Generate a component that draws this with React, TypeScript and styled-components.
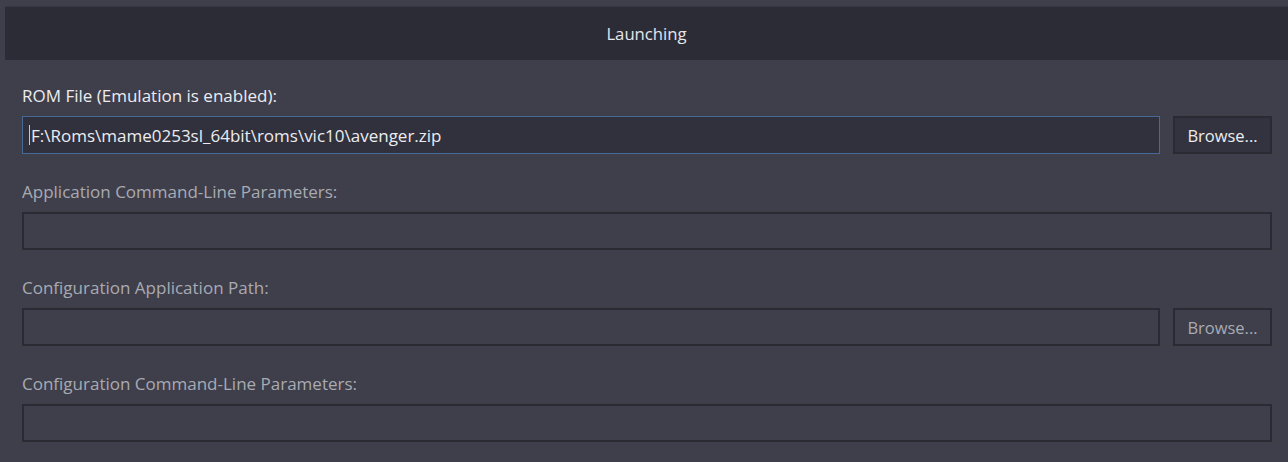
import React from 'react';
import styled, {createGlobalStyle} from 'styled-components';

const Global = createGlobalStyle`
  html, body {
    margin: 0;
    padding: 0;
    background: #3e3f4b;
  }
  body {
    font-family: "Open Sans", "Noto Sans", "Liberation Sans", sans-serif;
    overflow: hidden;
  }
`;

const Page = styled.div`
  width: 1288px;
  height: 462px;
  background: #3e3f4b;
  padding-top: 6px;
  box-sizing: border-box;
`;

const Header = styled.div`
  margin-left: 5px;
  height: 54px;
  background: #2c2c37;
  border-top: 1px solid #363744;
  box-sizing: border-box;
  display: flex;
  align-items: center;
  justify-content: center;
  color: #e6e6ea;
  font-size: 16.7px;
`;

const Form = styled.div`
  padding: 24px 16px 0 22px;
  display: flex;
  flex-direction: column;
  gap: 26px;
`;

const Field = styled.div`
  display: flex;
  flex-direction: column;
  gap: 8px;
`;

const Label = styled.div<{$active?: boolean}>`
  height: 24px;
  line-height: 24px;
  font-size: 17px;
  color: ${p => (p.$active ? '#ececf0' : '#a9aab2')};
`;

const Row = styled.div`
  display: flex;
  gap: 13px;
  height: 38px;
`;

const Input = styled.div<{$focused?: boolean}>`
  flex: 1;
  box-sizing: border-box;
  border: ${p => (p.$focused ? '1px solid #46699a' : '2px solid #2a2a33')};
  background: ${p => (p.$focused ? '#30313c' : '#3e3f4b')};
  color: #ececf0;
  font-size: 17px;
  display: flex;
  align-items: center;
  padding-left: 6px;
`;

const Caret = styled.span`
  display: inline-block;
  width: 1px;
  height: 20px;
  background: #c8c8cc;
  margin-right: 1px;
`;

const Browse = styled.button<{$disabled?: boolean}>`
  width: 99px;
  box-sizing: border-box;
  border: 2px solid #2a2a33;
  background: ${p => (p.$disabled ? '#3e3f4b' : '#32333e')};
  color: ${p => (p.$disabled ? '#a9aab2' : '#ececf0')};
  font-family: inherit;
  font-size: 16.5px;
  padding: 0;
  cursor: default;
`;

export default function App() {
  return (
    <Page>
      <Global />
      <Header>Launching</Header>
      <Form>
        <Field>
          <Label $active>ROM File (Emulation is enabled):</Label>
          <Row>
            <Input $focused>
              <Caret />F:\Roms\mame0253sl_64bit\roms\vic10\avenger.zip
            </Input>
            <Browse>Browse...</Browse>
          </Row>
        </Field>
        <Field>
          <Label>Application Command-Line Parameters:</Label>
          <Row>
            <Input />
          </Row>
        </Field>
        <Field>
          <Label>Configuration Application Path:</Label>
          <Row>
            <Input />
            <Browse $disabled>Browse...</Browse>
          </Row>
        </Field>
        <Field>
          <Label>Configuration Command-Line Parameters:</Label>
          <Row>
            <Input />
          </Row>
        </Field>
      </Form>
    </Page>
  );
}
